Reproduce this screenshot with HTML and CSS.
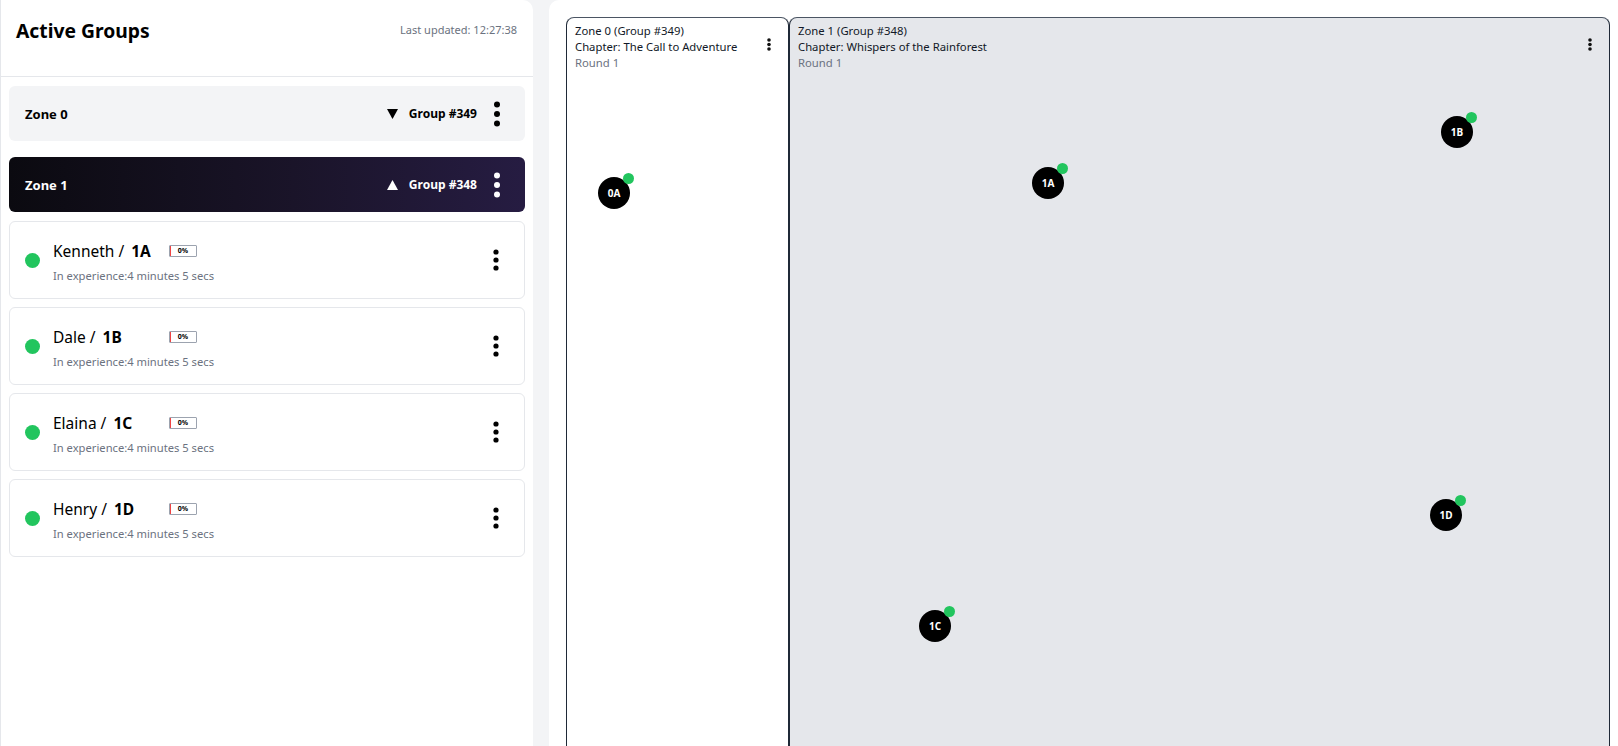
FILE: index.html
```html
<!DOCTYPE html>
<html lang="en">
<head>
<meta charset="utf-8">
<title>Active Groups</title>
<link rel="stylesheet" href="styles.css">
</head>
<body>
<div class="app">
  <aside class="groups">
    <header class="groups-head">
      <h1>Active Groups</h1>
      <span class="updated">Last updated: 12:27:38</span>
    </header>
    <div class="zone-list">
      <div class="zone">
        <div class="zone-row">
          <span class="zone-name">Zone 0</span>
          <div class="zone-meta">
            <svg class="tri" viewBox="0 0 11 10"><polygon points="0,0 11,0 5.5,10" fill="#000"/></svg>
            <span class="gid">Group #349</span>
            <button class="kebab"><svg width="8" height="26" viewBox="0 0 8 26"><circle cx="4" cy="3.5" r="3"/><circle cx="4" cy="13" r="3"/><circle cx="4" cy="22.5" r="3"/></svg></button>
          </div>
        </div>
      </div>
      <div class="zone">
        <div class="zone-row dark">
          <span class="zone-name">Zone 1</span>
          <div class="zone-meta">
            <svg class="tri" viewBox="0 0 11 10"><polygon points="5.5,0 11,10 0,10" fill="#fff"/></svg>
            <span class="gid">Group #348</span>
            <button class="kebab"><svg width="8" height="26" viewBox="0 0 8 26"><circle cx="4" cy="3.5" r="3"/><circle cx="4" cy="13" r="3"/><circle cx="4" cy="22.5" r="3"/></svg></button>
          </div>
        </div>
        <div class="members">
          <div class="member">
            <span class="status"></span>
            <div class="info">
              <div class="name-line"><span class="name">Kenneth / <b>1A</b></span><span class="pct">0%</span></div>
              <div class="sub">In experience:4 minutes 5 secs</div>
            </div>
            <button class="kebab"><svg width="8" height="22" viewBox="0 0 8 22"><circle cx="4" cy="3" r="2.6"/><circle cx="4" cy="11" r="2.6"/><circle cx="4" cy="19" r="2.6"/></svg></button>
          </div>
          <div class="member">
            <span class="status"></span>
            <div class="info">
              <div class="name-line"><span class="name">Dale / <b>1B</b></span><span class="pct">0%</span></div>
              <div class="sub">In experience:4 minutes 5 secs</div>
            </div>
            <button class="kebab"><svg width="8" height="22" viewBox="0 0 8 22"><circle cx="4" cy="3" r="2.6"/><circle cx="4" cy="11" r="2.6"/><circle cx="4" cy="19" r="2.6"/></svg></button>
          </div>
          <div class="member">
            <span class="status"></span>
            <div class="info">
              <div class="name-line"><span class="name">Elaina / <b>1C</b></span><span class="pct">0%</span></div>
              <div class="sub">In experience:4 minutes 5 secs</div>
            </div>
            <button class="kebab"><svg width="8" height="22" viewBox="0 0 8 22"><circle cx="4" cy="3" r="2.6"/><circle cx="4" cy="11" r="2.6"/><circle cx="4" cy="19" r="2.6"/></svg></button>
          </div>
          <div class="member">
            <span class="status"></span>
            <div class="info">
              <div class="name-line"><span class="name">Henry / <b>1D</b></span><span class="pct">0%</span></div>
              <div class="sub">In experience:4 minutes 5 secs</div>
            </div>
            <button class="kebab"><svg width="8" height="22" viewBox="0 0 8 22"><circle cx="4" cy="3" r="2.6"/><circle cx="4" cy="11" r="2.6"/><circle cx="4" cy="19" r="2.6"/></svg></button>
          </div>
        </div>
      </div>
    </div>
  </aside>

  <main class="stage">
    <div class="zones">
      <section class="zbox zbox-0">
        <div class="zbox-head">
          <div class="zbox-text">
            <div>Zone 0 (Group #349)</div>
            <div>Chapter: The Call to Adventure</div>
            <div class="round">Round 1</div>
          </div>
          <svg class="zkebab" width="10" height="13" viewBox="0 0 10 13"><circle cx="5" cy="2" r="1.8"/><circle cx="5" cy="6.5" r="1.8"/><circle cx="5" cy="11" r="1.8"/></svg>
        </div>
        <div class="node" style="left:31px;top:159px">0A<span class="online"></span></div>
      </section>
      <section class="zbox zbox-1">
        <div class="zbox-head">
          <div class="zbox-text">
            <div>Zone 1 (Group #348)</div>
            <div>Chapter: Whispers of the Rainforest</div>
            <div class="round">Round 1</div>
          </div>
          <svg class="zkebab" width="10" height="13" viewBox="0 0 10 13"><circle cx="5" cy="2" r="1.8"/><circle cx="5" cy="6.5" r="1.8"/><circle cx="5" cy="11" r="1.8"/></svg>
        </div>
        <div class="node" style="left:242px;top:149px">1A<span class="online"></span></div>
        <div class="node" style="left:651px;top:98px">1B<span class="online"></span></div>
        <div class="node" style="left:640px;top:481px">1D<span class="online"></span></div>
        <div class="node" style="left:129px;top:592px">1C<span class="online"></span></div>
      </section>
    </div>
  </main>
</div>
</body>
</html>
```

FILE: styles.css
```css
* {
  box-sizing: border-box;
  margin: 0;
  padding: 0;
}

html, body {
  height: 100%;
}

body {
  font-family: "Noto Sans", "Open Sans", sans-serif;
  background: #f3f4f6;
  color: #111827;
  overflow: hidden;
}

.app {
  display: flex;
  gap: 16px;
  height: 100vh;
}

/* ---------- left panel ---------- */
.groups {
  width: 533px;
  flex: none;
  background: #fff;
  border-left: 1px solid #e5e7eb;
  border-radius: 0 10px 0 0;
}

.groups-head {
  height: 77px;
  border-bottom: 1px solid #e5e7eb;
  display: flex;
  justify-content: space-between;
  align-items: flex-start;
  padding: 17px 16px 0 15px;
}

.groups-head h1 {
  font-size: 19.3px;
  font-weight: 700;
  line-height: 28px;
  color: #000;
}

.updated {
  font-size: 11px;
  line-height: 26px;
  color: #6b7280;
}

.zone-list {
  padding: 9px 8px 0 8px;
  display: flex;
  flex-direction: column;
  gap: 16px;
}

.zone-row {
  height: 55px;
  border-radius: 6px;
  background: #f3f4f6;
  display: flex;
  align-items: center;
  justify-content: space-between;
  padding: 0 16px;
  color: #000;
}

.zone-row.dark {
  background: linear-gradient(90deg, #0b0a10 0%, #1a1429 55%, #261c42 100%);
  color: #fff;
}

.zone-name {
  font-size: 13px;
  font-weight: 700;
}

.zone-meta {
  display: flex;
  align-items: center;
}

.tri {
  width: 11px;
  height: 10px;
  margin-right: 11px;
}

.gid {
  font-size: 12px;
  font-weight: 700;
  margin-right: 8px;
}

.kebab {
  width: 24px;
  height: 28px;
  border: 0;
  background: transparent;
  display: flex;
  align-items: center;
  justify-content: center;
  color: #000;
}

.dark .kebab {
  color: #fff;
}

.kebab svg {
  fill: currentColor;
}

.members {
  margin-top: 9px;
  display: flex;
  flex-direction: column;
  gap: 8px;
}

.member {
  height: 78px;
  border: 1px solid #e5e7eb;
  border-radius: 6px;
  display: flex;
  align-items: center;
  padding: 0 16px 0 15px;
}

.status {
  width: 15px;
  height: 15px;
  border-radius: 50%;
  background: #22c55e;
  flex: none;
}

.info {
  flex: 1;
  margin-left: 13px;
  margin-top: 4px;
}

.name-line {
  display: flex;
  align-items: center;
  height: 22px;
}

.name {
  width: 116px;
  font-size: 15.5px;
  color: #000;
  white-space: nowrap;
}

.name b {
  margin-left: 3px;
  font-weight: 700;
}

.pct {
  width: 28px;
  height: 12px;
  border: 1px solid #9ca3af;
  border-radius: 1px;
  box-shadow: inset 1px 0 0 #ef4444;
  font-size: 7px;
  font-weight: 700;
  line-height: 10px;
  text-align: center;
  color: #000;
}

.sub {
  margin-top: 5px;
  font-size: 11.2px;
  line-height: 17px;
  color: #6b7280;
}

/* ---------- right stage ---------- */
.stage {
  flex: 1;
  background: #fff;
  border-radius: 10px 0 0 0;
  padding: 17px 8px 0 17px;
  display: flex;
}

.zones {
  flex: 1;
  display: flex;
  align-items: stretch;
  min-height: 780px;
}

.zbox {
  position: relative;
  border: 1px solid #1f2937;
  border-top-color: #4b5563;
  border-radius: 8px;
}

.zbox-0 {
  width: 223px;
  flex: none;
  background: #fff;
}

.zbox-1 {
  flex: 1;
  background: #e5e7eb;
}

.zbox-head {
  display: flex;
  justify-content: space-between;
  align-items: flex-start;
  padding: 5px 14px 0 8px;
}

.zbox-text {
  font-size: 11.3px;
  line-height: 16px;
  color: #111827;
}

.zbox-text .round {
  color: #6b7280;
}

.zkebab {
  margin-top: 15px;
  fill: #111;
  flex: none;
}

.node {
  position: absolute;
  width: 32px;
  height: 32px;
  border-radius: 50%;
  background: #000;
  color: #fff;
  font-size: 10px;
  font-weight: 700;
  display: flex;
  align-items: center;
  justify-content: center;
}

.online {
  position: absolute;
  width: 11px;
  height: 11px;
  border-radius: 50%;
  background: #22c55e;
  right: -4px;
  top: -4px;
}
```
